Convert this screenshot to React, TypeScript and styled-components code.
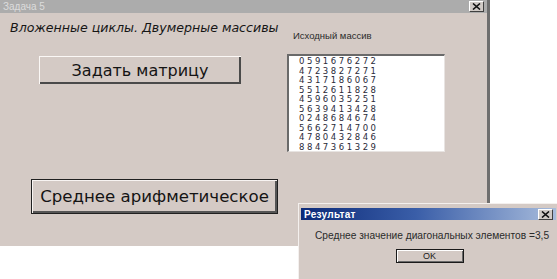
import React from 'react'
import styled, { createGlobalStyle } from 'styled-components'

const GlobalStyle = createGlobalStyle`
  html, body {
    margin: 0;
    padding: 0;
    background: #ffffff;
  }
`

const Desktop = styled.div`
  position: relative;
  width: 557px;
  height: 279px;
  overflow: hidden;
  background: #ffffff;
  font-family: 'Liberation Sans', Arial, sans-serif;
`

const Window = styled.div<{ $left: number; $top: number; $w: number; $h: number }>`
  position: absolute;
  left: ${(p) => p.$left}px;
  top: ${(p) => p.$top}px;
  width: ${(p) => p.$w}px;
  height: ${(p) => p.$h}px;
  box-sizing: border-box;
  background: #d4cac5;
  border-right: 3px solid #6e6e6e;
  display: flex;
  flex-direction: column;
`

const DialogWindow = styled(Window)`
  border: 1px solid #f4f0ee;
  border-right: 2px solid #707070;
  border-bottom: none;
  padding: 4px 2px 0 2px;
`

const TitleBar = styled.div<{ $active?: boolean }>`
  height: ${(p) => (p.$active ? 12 : 13)}px;
  flex: none;
  display: flex;
  align-items: center;
  justify-content: space-between;
  padding: 0 3px 0 3px;
  background: ${(p) =>
    p.$active ? 'linear-gradient(90deg, #0c2a78 0%, #3a5ea8 45%, #a8bcdc 100%)' : '#acacac'};
`

const TitleText = styled.span<{ $active?: boolean }>`
  font-size: 10px;
  font-weight: ${(p) => (p.$active ? 700 : 400)};
  color: ${(p) => (p.$active ? '#ffffff' : '#dcdcdc')};
  letter-spacing: ${(p) => (p.$active ? '0.3px' : '0')};
`

const CloseButton = styled.div`
  width: 15px;
  height: 11px;
  box-sizing: border-box;
  background: #d0cac6;
  border-top: 1px solid #ffffff;
  border-left: 1px solid #ffffff;
  border-right: 1px solid #404040;
  border-bottom: 1px solid #404040;
  display: flex;
  align-items: center;
  justify-content: center;
`

const Body = styled.div`
  flex: 1;
  display: grid;
  grid-template-columns: 284px 1fr;
`

const LeftColumn = styled.div`
  display: flex;
  flex-direction: column;
  align-items: flex-start;
`

const Heading = styled.div`
  margin: 7px 0 0 10px;
  font-family: 'DejaVu Sans', Verdana, sans-serif;
  font-style: italic;
  font-size: 12.6px;
  line-height: 16px;
  color: #161616;
  white-space: nowrap;
`

const PushButton = styled.div<{ $w: number; $h: number; $size: number; $default?: boolean }>`
  width: ${(p) => p.$w}px;
  height: ${(p) => p.$h}px;
  box-sizing: border-box;
  display: flex;
  align-items: center;
  justify-content: center;
  font-family: 'DejaVu Sans', Verdana, sans-serif;
  font-size: ${(p) => p.$size}px;
  color: #141414;
  background: #d4cac5;
  border: 1px solid ${(p) => (p.$default ? '#202020' : 'transparent')};
  box-shadow: ${(p) =>
    p.$default
      ? 'inset 1px 1px 0 #f8f4f2, inset -2px -2px 0 #555'
      : 'inset 1px 1px 0 #fbf8f6, inset -2px -2px 0 #4a4a4a'};
  white-space: nowrap;
`

const FirstButton = styled(PushButton)`
  margin: 19px 0 0 38px;
`

const SecondButton = styled(PushButton)`
  margin: 94px 0 0 31px;
`

const RightColumn = styled.div`
  display: flex;
  flex-direction: column;
  align-items: flex-start;
`

const Caption = styled.div`
  margin: 17px 0 0 9px;
  font-size: 9.5px;
  color: #2a2a2a;
`

const ListBox = styled.div`
  margin: 13px 0 0 3px;
  width: 158px;
  height: 98px;
  box-sizing: border-box;
  background: #ffffff;
  border-top: 2px solid #6a6a6a;
  border-left: 2px solid #6a6a6a;
  border-right: 1px solid #e8e4e2;
  border-bottom: 1px solid #e8e4e2;
  padding: 1px 0 0 10px;
`

const Row = styled.div`
  font-family: 'DejaVu Sans', Verdana, sans-serif;
  font-size: 8.5px;
  line-height: 9.55px;
  letter-spacing: 2.55px;
  color: #2a2a3a;
`

const DialogBody = styled.div`
  display: flex;
  flex-direction: column;
  align-items: center;
`

const Message = styled.div`
  margin: 10px 0 0 14px;
  align-self: flex-start;
  font-size: 10.2px;
  color: #2a2a2a;
  white-space: nowrap;
`

const OkButton = styled.div`
  margin: 8px 0 0 2px;
  width: 68px;
  height: 14px;
  box-sizing: border-box;
  display: flex;
  align-items: center;
  justify-content: center;
  font-size: 9px;
  color: #1a1a1a;
  border: 1px solid #1a1a1a;
  box-shadow: inset 1px 1px 0 #ffffff, inset -1px -1px 0 #6a6a6a;
`

const CloseIcon = () => (
  <svg width="9" height="7" viewBox="0 0 9 7">
    <path d="M1 0.5 L8 6.5 M8 0.5 L1 6.5" stroke="#111" strokeWidth="1.6" />
  </svg>
)

const matrix = [
  '0591676272',
  '4723827271',
  '4317186067',
  '5512611828',
  '4596035251',
  '5639413428',
  '0248684674',
  '5662714700',
  '4780432846',
  '8847361329',
]

export default function App() {
  return (
    <Desktop>
      <GlobalStyle />
      <Window $left={0} $top={0} $w={490} $h={246}>
        <TitleBar>
          <TitleText>Задача 5</TitleText>
          <CloseButton>
            <CloseIcon />
          </CloseButton>
        </TitleBar>
        <Body>
          <LeftColumn>
            <Heading>Вложенные циклы. Двумерные массивы</Heading>
            <FirstButton $w={204} $h={30} $size={16}>
              Задать матрицу
            </FirstButton>
            <SecondButton $w={247} $h={35} $size={16.6} $default>
              Среднее арифметическое
            </SecondButton>
          </LeftColumn>
          <RightColumn>
            <Caption>Исходный массив</Caption>
            <ListBox>
              {matrix.map((r) => (
                <Row key={r}>{r}</Row>
              ))}
            </ListBox>
          </RightColumn>
        </Body>
      </Window>
      <DialogWindow $left={298} $top={203} $w={262} $h={80}>
        <TitleBar $active>
          <TitleText $active>Результат</TitleText>
          <CloseButton>
            <CloseIcon />
          </CloseButton>
        </TitleBar>
        <DialogBody>
          <Message>Среднее значение диагональных элементов =3,5</Message>
          <OkButton>OK</OkButton>
        </DialogBody>
      </DialogWindow>
    </Desktop>
  )
}
